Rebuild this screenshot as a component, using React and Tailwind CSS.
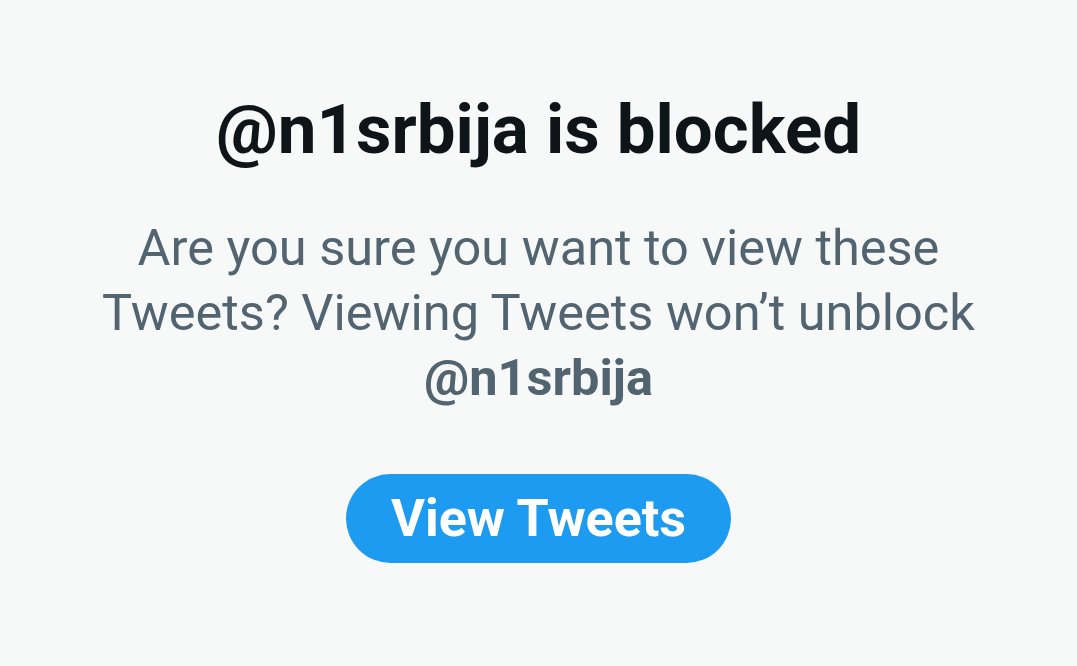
export default function App() {
  return (
    <div className="w-[1077px] h-[666px] bg-[#f7f9f9] flex flex-col items-center" style={{ fontFamily: 'Roboto, "Noto Sans", sans-serif' }}>
      <h1 className="mt-[88px] text-[69px] leading-[84px] font-bold text-[#0f1419]">@n1srbija is blocked</h1>
      <p className="mt-[43px] text-[50.5px] leading-[65px] text-[#536471] text-center">
        Are you sure you want to view these<br />Tweets? Viewing Tweets won’t unblock<br /><span className="font-bold">@n1srbija</span>
      </p>
      <button className="mt-[64px] w-[385px] h-[89px] rounded-full bg-[#1d9bf0] text-white text-[52px] font-bold">View Tweets</button>
    </div>
  );
}
